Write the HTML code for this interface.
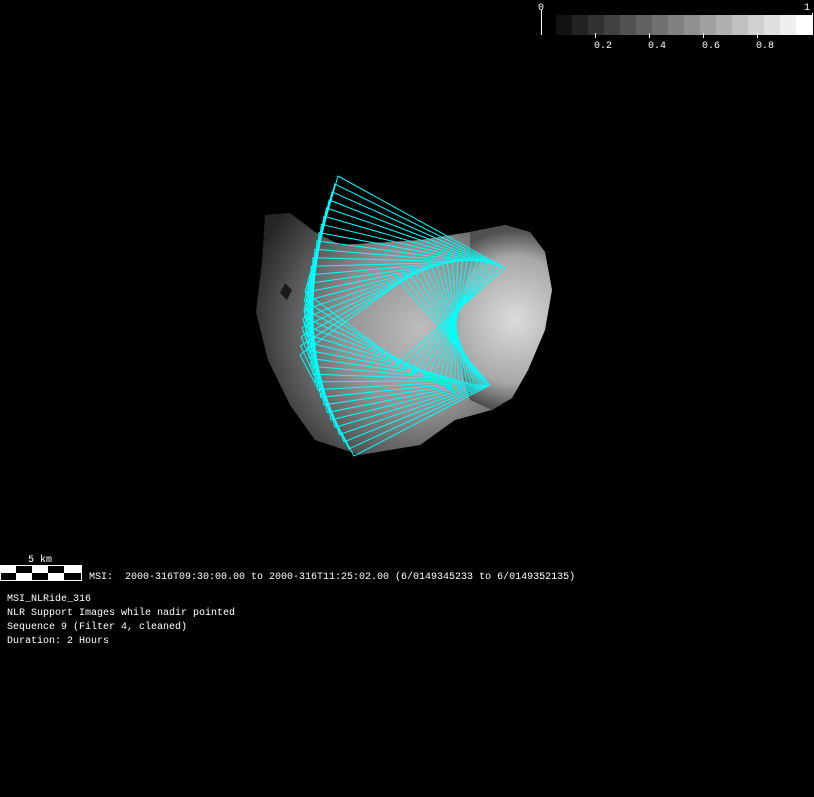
<!DOCTYPE html>
<html><head><meta charset="utf-8"><style>
html,body{margin:0;padding:0;background:#000;width:814px;height:797px;overflow:hidden}
svg{display:block}
text{font-family:"Liberation Mono","DejaVu Sans Mono",monospace;font-size:10px;fill:#fff}
</style></head><body>
<svg width="814" height="797" xmlns="http://www.w3.org/2000/svg">
<defs>
<radialGradient id="ast" cx="420" cy="330" r="180" gradientUnits="userSpaceOnUse">
<stop offset="0" stop-color="#bdbdbd"/>
<stop offset="0.45" stop-color="#909090"/>
<stop offset="0.8" stop-color="#4a4a4a"/>
<stop offset="1" stop-color="#252525"/>
</radialGradient>
<radialGradient id="ast2" cx="515" cy="320" r="90" gradientUnits="userSpaceOnUse">
<stop offset="0" stop-color="#dcdcdc"/>
<stop offset="0.7" stop-color="#a8a8a8"/>
<stop offset="1" stop-color="#505050"/>
</radialGradient>
</defs>
<polygon fill="url(#ast)" points="265,215 290,213 315,232 340,245 420,240 470,232 505,225 530,232 545,252 552,290 545,330 528,370 512,398 492,410 455,420 420,445 360,455 315,440 290,405 268,360 256,312 262,262"/>
<polygon fill="url(#ast2)" points="470,232 505,225 530,232 545,252 552,290 545,330 528,370 512,398 492,410 470,400 458,360 460,310 470,270"/>
<polygon fill="#1a1a1a" points="285,283 292,290 287,300 280,293"/>
<g id="frames" fill="none" stroke="#00ffff" stroke-width="1"></g>
<g id="cb"></g>
<line x1="541.5" y1="10" x2="541.5" y2="35" stroke="#fff"/>
<line x1="812.5" y1="13" x2="812.5" y2="35" stroke="#fff"/>
<text x="538" y="10">0</text>
<text x="804" y="10">1</text>
<g stroke="#fff"><line x1="595.5" y1="33" x2="595.5" y2="38"/><line x1="649.5" y1="33" x2="649.5" y2="38"/><line x1="703.5" y1="33" x2="703.5" y2="38"/><line x1="757.5" y1="33" x2="757.5" y2="38"/></g>
<text x="594" y="48">0.2</text><text x="648" y="48">0.4</text><text x="702" y="48">0.6</text><text x="756" y="48">0.8</text>
<text x="28" y="562">5 km</text>
<rect x="0" y="565" width="82" height="16" fill="#fff"/>
<rect x="16" y="566" width="16" height="7" fill="#000"/>
<rect x="48" y="566" width="16" height="7" fill="#000"/>
<rect x="1" y="573" width="15" height="7" fill="#000"/>
<rect x="32" y="573" width="16" height="7" fill="#000"/>
<rect x="64" y="573" width="17" height="7" fill="#000"/>
<text x="89" y="579" xml:space="preserve">MSI:  2000-316T09:30:00.00 to 2000-316T11:25:02.00 (6/0149345233 to 6/0149352135)</text>
<text x="7" y="601">MSI_NLRide_316</text>
<text x="7" y="615">NLR Support Images while nadir pointed</text>
<text x="7" y="629">Sequence 9 (Filter 4, cleaned)</text>
<text x="7" y="643">Duration: 2 Hours</text>
</svg>
<script>
var ns="http://www.w3.org/2000/svg";
var cb=document.getElementById("cb");
for(var i=0;i<16;i++){var r=document.createElementNS(ns,"rect");r.setAttribute("x",556+i*16);r.setAttribute("y",15);r.setAttribute("width",16);r.setAttribute("height",20);var v=Math.round(18+i*(237/15));r.setAttribute("fill","rgb("+v+","+v+","+v+")");cb.appendChild(r);}
var A=[[338,176],[505,268],[399,362],[305,292]];
var M=[[312,262],[455,262],[457,380],[314,378]];
var B=[[300,355],[400,282],[490,385],[354,456]];
var g=document.getElementById("frames");var N=22;
for(var k=0;k<N;k++){var t=k/(N-1);var l0=(2*t-1)*(t-1),l1=4*t*(1-t),l2=t*(2*t-1);var p=[];
for(var j=0;j<4;j++){var x=A[j][0]*l0+M[j][0]*l1+B[j][0]*l2,y=A[j][1]*l0+M[j][1]*l1+B[j][1]*l2;p.push(x.toFixed(1)+","+y.toFixed(1));}
var pg=document.createElementNS(ns,"polygon");pg.setAttribute("points",p.join(" "));g.appendChild(pg);}
</script>
</body></html>
